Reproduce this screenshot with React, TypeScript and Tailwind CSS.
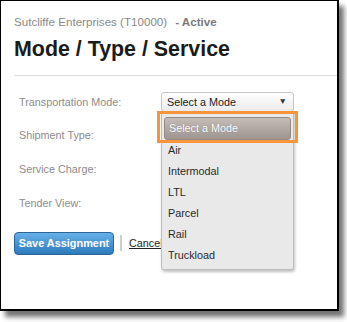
import React from 'react';

const modes = ['Air', 'Intermodal', 'LTL', 'Parcel', 'Rail', 'Truckload'];
const labels = ['Transportation Mode:', 'Shipment Type:', 'Service Charge:', 'Tender View:'];

const ModeSelect: React.FC = () => (
  <div className="relative w-[133px] h-[20px]">
    <div className="flex items-center justify-between h-full px-[5px] border border-[#c6c6c6] rounded-[3px] bg-gradient-to-b from-white to-[#ebebeb] text-[10.8px] text-[#222]">
      <span>Select a Mode</span>
      <span className="text-[8.5px] text-[#333] mr-[1px]">▼</span>
    </div>
    <div className="absolute left-0 top-[19px] w-[133px] z-10 bg-[#e9e9e9] border border-[#bdbdbd] rounded-b-[3px] shadow-[1px_2px_3px_rgba(0,0,0,0.25)] pt-[5px] pb-[3px]">
      <div className="mx-[2px] h-[23px] flex items-center px-[4px] rounded-[3px] border border-[#958b86] bg-gradient-to-b from-[#c4bcb7] to-[#9f9590] text-white text-[10.8px] [text-shadow:0_0_1px_rgba(0,0,0,0.3)]">
        Select a Mode
      </div>
      {modes.map((m) => (
        <div key={m} className="h-[21px] flex items-center px-[6px] text-[10.8px] text-[#2a2a2a]">
          {m}
        </div>
      ))}
    </div>
    <div className="absolute left-[-4px] top-[19px] w-[141px] h-[32px] border-[3px] border-[#f7943c] z-20" />
  </div>
);

export default function App() {
  return (
    <div className="w-[347px] h-[322px] bg-white font-['Liberation_Sans',Arial,sans-serif]">
      <div className="w-[339px] h-[311px] bg-white border border-black border-r-2 border-b-2 shadow-[5px_6px_5px_rgba(0,0,0,0.55)] pt-[14px] pl-[13px]">
        <div className="text-[11.6px] leading-[14px] text-[#8a8a8a]">
          Sutcliffe Enterprises (T10000)
          <span className="ml-[8px] font-bold text-[#7a7a7a]">- Active</span>
        </div>
        <h1 className="mt-[7px] text-[21.4px] leading-[26px] font-bold text-[#1b1b1b]">Mode / Type / Service</h1>
        <div className="mt-[13px] h-px bg-[#dcdcdc]" />
        <div className="mt-[9px] flex flex-col">
          {labels.map((l, i) => (
            <div key={l} className="h-[33.7px] flex items-center">
              <span className="w-[147px] pl-[5px] text-[10.8px] text-[#8c8c8c]">{l}</span>
              {i === 0 && <ModeSelect />}
            </div>
          ))}
        </div>
        <div className="mt-[12px] flex items-center">
          <button className="w-[100px] h-[23px] rounded-[4px] border border-[#2b6598] bg-gradient-to-b from-[#66b0e8] to-[#2c7bbd] text-white font-bold text-[10.9px]">
            Save Assignment
          </button>
          <div className="ml-[6px] w-[2px] h-[16px] bg-[#cfcfcf]" />
          <span className="ml-[7px] text-[10.8px] text-[#222] underline">Cancel</span>
        </div>
      </div>
    </div>
  );
}
